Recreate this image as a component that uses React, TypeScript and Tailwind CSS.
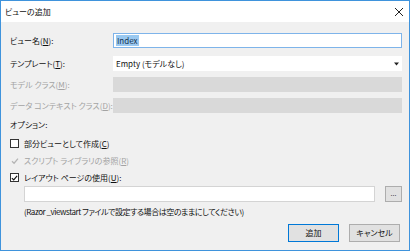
import React from 'react';

const font = "font-['Noto_Sans_CJK_JP','Noto_Sans',sans-serif] [font-feature-settings:'palt']";

const Check = ({ color }: { color: string }) => (
  <svg width="8" height="8" viewBox="0 0 8 8" fill="none">
    <path d="M1 4.2 L3.1 6.2 L7 1.6" stroke={color} strokeWidth="1.3" />
  </svg>
);

const Key = ({ k }: { k: string }) => (
  <>
    (<span className="underline underline-offset-1">{k}</span>)
  </>
);

const Row = ({ label, k, disabled, children }: { label: string; k: string; disabled?: boolean; children: React.ReactNode }) => (
  <div className="flex items-center h-[15px]">
    <div className={`w-[103px] whitespace-nowrap text-[8px] leading-none ${disabled ? 'text-[#a3a3a3]' : 'text-[#111]'}`}>
      {label}
      <Key k={k} />:
    </div>
    <div className="flex-1 h-full">{children}</div>
  </div>
);

const App = () => {
  return (
    <div className={`${font} w-[410px] h-[251px] flex flex-col border border-[#3f93dc] bg-[#f0f0f0]`}>
      {/* title bar */}
      <div className="h-[21px] bg-white flex items-center justify-between pl-[4px] pr-[5px] shrink-0">
        <span className="text-[8px] leading-none text-[#111]">ビューの追加</span>
        <svg width="10" height="10" viewBox="0 0 10 10">
          <path d="M1 1 L9 9 M9 1 L1 9" stroke="#222" strokeWidth="1" />
        </svg>
      </div>

      <div className="flex-1 flex flex-col pl-[9px] pr-[7px] pt-[11px]">
        <Row label="ビュー名" k="N">
          <div className="h-full border border-[#7eb4ea] bg-white flex items-center px-[2px]">
            <span className="bg-[#99c8f0] text-[#17324f] text-[8px] leading-[11px] px-[1px]">Index</span>
          </div>
        </Row>
        <div className="mt-[8px]">
          <Row label="テンプレート" k="T">
            <div className="h-full bg-white flex items-center justify-between pl-[3px] pr-[3px]">
              <span className="text-[8px] leading-none text-[#111]">Empty (モデルなし)</span>
              <svg width="5" height="4" viewBox="0 0 5 4">
                <path d="M0 0.5 L5 0.5 L2.5 3.5 Z" fill="#222" />
              </svg>
            </div>
          </Row>
        </div>
        <div className="mt-[6px]">
          <Row label="モデル クラス" k="M" disabled>
            <div className="h-full bg-[#d9d9d9]" />
          </Row>
        </div>
        <div className="mt-[6px]">
          <Row label="データ コンテキスト クラス" k="D" disabled>
            <div className="h-full bg-[#d9d9d9]" />
          </Row>
        </div>

        <div className="mt-[8px] text-[8px] leading-none text-[#111]">オプション:</div>

        <div className="mt-[10px] flex flex-col gap-[8px]">
          <div className="flex items-center gap-[5px] h-[9px]">
            <div className="w-[9px] h-[9px] border border-[#333] bg-white" />
            <span className="text-[8px] leading-none text-[#111]">部分ビューとして作成<Key k="C" /></span>
          </div>
          <div className="flex items-center gap-[5px] h-[9px]">
            <div className="w-[9px] h-[9px] flex items-center justify-center">
              <Check color="#b5b5b5" />
            </div>
            <span className="text-[8px] leading-none text-[#a3a3a3]">スクリプト ライブラリの参照<Key k="R" /></span>
          </div>
          <div className="flex items-center gap-[5px] h-[9px]">
            <div className="w-[9px] h-[9px] border border-[#333] bg-white flex items-center justify-center">
              <Check color="#111" />
            </div>
            <span className="text-[8px] leading-none text-[#111]">レイアウト ページの使用<Key k="U" />:</span>
          </div>
        </div>

        <div className="mt-[4px] pl-[14px] flex items-center gap-[10px]">
          <div className="flex-1 h-[16px] bg-white border border-[#d4d4d4]" />
          <div className="w-[17px] h-[16px] border border-[#adadad] bg-[#e1e1e1] flex items-center justify-center">
            <span className="text-[7px] leading-none text-[#333] -mt-[2px]">...</span>
          </div>
        </div>
        <div className="mt-[6px] pl-[14px] text-[8px] leading-none text-[#111] whitespace-nowrap tracking-[-0.45px]">
          (Razor _viewstart ファイルで設定する場合は空のままにしてください)
        </div>

        <div className="mt-[8px] flex justify-end gap-[10px] pr-[2px]">
          <div className="w-[51px] h-[18px] border border-[#0078d7] bg-[#e1e1e1] flex items-center justify-center text-[8px] leading-none text-[#111]">
            追加
          </div>
          <div className="w-[51px] h-[18px] border border-[#adadad] bg-[#e1e1e1] flex items-center justify-center text-[8px] leading-none text-[#111]">
            キャンセル
          </div>
        </div>
      </div>
    </div>
  );
};

export default App;
